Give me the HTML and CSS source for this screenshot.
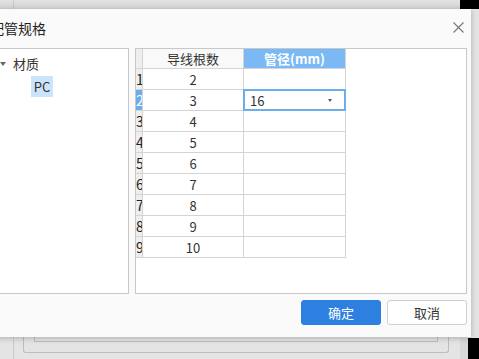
FILE: index.html
```html
<!DOCTYPE html>
<html lang="zh-CN">
<head>
    <meta charset="UTF-8">
    <title>配管规格</title>
    <link rel="stylesheet" href="styles.css">
</head>
<body>
    <!-- window behind the dialog -->
    <div class="backdrop">
        <div class="bd-top"></div>
        <div class="bd-divider"></div>
        <div class="bd-frame outer"></div>
        <div class="bd-frame inner"></div>
        <div class="bd-black top"></div>
        <div class="bd-black bottom"></div>
    </div>

    <div class="dialog">
        <div class="dialog-title">
            <span>配管规格</span>
            <button class="close" title="关闭">
                <svg width="11" height="11" viewBox="0 0 11 11">
                    <path d="M0.5 0.5 L10.5 10.5 M10.5 0.5 L0.5 10.5" stroke="#777" stroke-width="1.1" fill="none"/>
                </svg>
            </button>
        </div>

        <div class="dialog-body">
            <div class="panel tree">
                <div class="tree-node">
                    <span class="caret"></span>
                    <span>材质</span>
                </div>
                <div class="tree-leaf"><span class="selected">PC</span></div>
            </div>

            <div class="panel grid-panel">
                <div class="grid">
                    <div class="cell rowhead"></div>
                    <div class="cell colhead">导线根数</div>
                    <div class="cell colhead active">管径(mm)</div>

                    <div class="cell rowhead">1</div>
                    <div class="cell num">2</div>
                    <div class="cell"></div>

                    <div class="cell rowhead current">2</div>
                    <div class="cell num">3</div>
                    <div class="cell editing">
                        <span>16</span>
                        <span class="dd"></span>
                    </div>

                    <div class="cell rowhead">3</div>
                    <div class="cell num">4</div>
                    <div class="cell"></div>

                    <div class="cell rowhead">4</div>
                    <div class="cell num">5</div>
                    <div class="cell"></div>

                    <div class="cell rowhead">5</div>
                    <div class="cell num">6</div>
                    <div class="cell"></div>

                    <div class="cell rowhead">6</div>
                    <div class="cell num">7</div>
                    <div class="cell"></div>

                    <div class="cell rowhead">7</div>
                    <div class="cell num">8</div>
                    <div class="cell"></div>

                    <div class="cell rowhead">8</div>
                    <div class="cell num">9</div>
                    <div class="cell"></div>

                    <div class="cell rowhead">9</div>
                    <div class="cell num">10</div>
                    <div class="cell"></div>
                </div>
            </div>
        </div>

        <div class="dialog-footer">
            <button class="btn primary">确定</button>
            <button class="btn">取消</button>
        </div>
    </div>
</body>
</html>
```

FILE: styles.css
```css
html, body {
    margin: 0;
    padding: 0;
}
body {
    width: 479px;
    height: 359px;
    overflow: hidden;
    position: relative;
    background: #e4e4e4;
    font-family: "Noto Sans CJK SC", "Noto Sans", sans-serif;
    font-size: 13px;
    color: #333;
}

/* background window */
.backdrop {
    position: absolute;
    inset: 0;
}
.bd-top {
    position: absolute;
    left: 0;
    top: 0;
    width: 479px;
    height: 9px;
    background: linear-gradient(#e2e2e2, #d6d6d6);
}
.bd-divider {
    position: absolute;
    left: 13px;
    top: 0;
    width: 1px;
    height: 359px;
    background: #c9c9c9;
}
.bd-frame {
    position: absolute;
    border: 1px solid #bdbdbd;
    border-top: none;
}
.bd-frame.outer {
    left: 23px;
    top: 320px;
    width: 424px;
    height: 32px;
    border-radius: 0 0 3px 3px;
}
.bd-frame.inner {
    left: 34px;
    top: 320px;
    width: 402px;
    height: 21px;
}
.bd-black {
    position: absolute;
    left: 460px;
    width: 19px;
    background: #000;
}
.bd-black.top {
    top: 0;
    height: 9px;
}
.bd-black.bottom {
    top: 338px;
    height: 21px;
    border-left: 8px solid #d8d8d8;
    width: 11px;
}

/* dialog */
.dialog {
    position: absolute;
    left: -22px;
    top: 9px;
    width: 493px;
    height: 328px;
    box-sizing: border-box;
    padding: 0 4px;
    background: #fafafa;
    box-shadow: 0 1px 6px rgba(0, 0, 0, 0.25);
    display: flex;
    flex-direction: column;
}
.dialog-title {
    height: 39px;
    display: flex;
    align-items: center;
    padding-left: 8px;
    padding-bottom: 1px;
    box-sizing: border-box;
    font-size: 14px;
    color: #222;
    position: relative;
}
.close {
    position: absolute;
    right: 2px;
    top: 12px;
    width: 13px;
    height: 13px;
    padding: 0;
    border: none;
    background: none;
    display: flex;
    align-items: center;
    justify-content: center;
}

.dialog-body {
    display: flex;
    gap: 6px;
    height: 246px;
}
.panel {
    background: #fff;
    border: 1px solid #c8c8c8;
    box-sizing: border-box;
}
.tree {
    width: 147px;
    padding-top: 6px;
}
.tree-node {
    display: flex;
    align-items: center;
    height: 17px;
    padding-left: 17px;
    gap: 7px;
}
.caret {
    width: 0;
    height: 0;
    border-left: 3px solid transparent;
    border-right: 3px solid transparent;
    border-top: 4px solid #666;
}
.tree-leaf {
    padding-left: 48px;
    margin-top: 4px;
}
.selected {
    display: inline-block;
    width: 22px;
    height: 21px;
    line-height: 21px;
    text-align: center;
    background: #cce4f9;
}

.grid-panel {
    flex: 1;
}
.grid {
    display: grid;
    grid-template-columns: 7px 101px 102px;
    grid-template-rows: 20px repeat(9, 21px);
}
.cell {
    box-sizing: border-box;
    border-right: 1px solid #d4d4d4;
    border-bottom: 1px solid #d4d4d4;
    display: flex;
    align-items: center;
    overflow: hidden;
    white-space: nowrap;
}
.rowhead {
    background: #eeeeee;
    font-size: 14px;
    justify-content: flex-start;
    padding-left: 0;
    color: #222;
}
.rowhead.current {
    background: #6aaef0;
    color: #fff;
}
.colhead {
    justify-content: center;
    background: #f9f9f9;
    color: #333;
}
.colhead.active {
    background: #7ab9f6;
    color: #fff;
    font-weight: bold;
}
.num {
    justify-content: center;
}
.editing {
    border: 2px solid #6cadec;
    margin-left: -1px;
    margin-top: -1px;
    padding-left: 5px;
    padding-right: 12px;
    justify-content: space-between;
}
.dd {
    width: 0;
    height: 0;
    border-left: 2.5px solid transparent;
    border-right: 2.5px solid transparent;
    border-top: 3px solid #555;
}

.dialog-footer {
    display: flex;
    justify-content: flex-end;
    gap: 6px;
    padding-top: 6px;
}
.btn {
    width: 80px;
    height: 25px;
    border: 1px solid #cfcfcf;
    border-radius: 3px;
    background: #fff;
    font-family: inherit;
    font-size: 13px;
    color: #333;
    padding: 0;
}
.btn.primary {
    background: #2d7fe0;
    border-color: #2d7fe0;
    color: #fff;
}
```
